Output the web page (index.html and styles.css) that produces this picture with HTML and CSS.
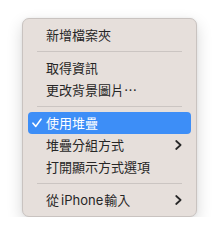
FILE: index.html
```html
<!DOCTYPE html>
<html lang="zh-Hant">
<head>
<meta charset="utf-8">
<link rel="stylesheet" href="styles.css">
</head>
<body>
<div class="menu">
  <div class="item"><span class="label">新增檔案夾</span></div>
  <div class="sep"></div>
  <div class="item"><span class="label">取得資訊</span></div>
  <div class="item"><span class="label">更改背景圖片…</span></div>
  <div class="sep"></div>
  <div class="item active">
    <svg class="check" width="10" height="10" viewBox="0 0 10 10"><polyline points="1,5.2 3.8,8.4 9,1.2" fill="none" stroke="#fff" stroke-width="1.6" stroke-linecap="round" stroke-linejoin="round"/></svg>
    <span class="label">使用堆疊</span>
  </div>
  <div class="item"><span class="label">堆疊分組方式</span>
    <svg class="chev" width="7" height="10" viewBox="0 0 7 10"><polyline points="1.2,1 5.6,5 1.2,9" fill="none" stroke="#262626" stroke-width="1.7" stroke-linecap="round" stroke-linejoin="round"/></svg>
  </div>
  <div class="item"><span class="label">打開顯示方式選項</span></div>
  <div class="sep"></div>
  <div class="item"><span class="label">從<span class="latin">iPhone</span>輸入</span>
    <svg class="chev" width="7" height="10" viewBox="0 0 7 10"><polyline points="1.2,1 5.6,5 1.2,9" fill="none" stroke="#262626" stroke-width="1.7" stroke-linecap="round" stroke-linejoin="round"/></svg>
  </div>
</div>
</body>
</html>
```
FILE: styles.css
```css
html, body {
  margin: 0;
  background: #ffffff;
}
body {
  padding: 18px 0 0 22px;
  font-family: "Noto Sans CJK TC", "Noto Sans", sans-serif;
  font-size: 13px;
  color: #262626;
}
.menu {
  width: 175px;
  box-sizing: border-box;
  background: #e6dfdb;
  border: 1px solid #c9c3c0;
  border-radius: 7px;
  padding: 5px 0;
  box-shadow: 0 6px 16px rgba(0, 0, 0, 0.16), 0 0 3px rgba(0, 0, 0, 0.06);
}
.item {
  height: 22px;
  margin: 0 5px;
  padding: 0 9px 0 18px;
  display: flex;
  align-items: center;
  justify-content: space-between;
  position: relative;
  border-radius: 4px;
  line-height: 22px;
}
.label {
  white-space: nowrap;
}
.latin {
  font-family: "Inter", "Noto Sans", sans-serif;
  font-size: 13px;
  margin: 0 1px 0 2px;
}
.active {
  background: #3d8ef7;
  color: #ffffff;
}
.check {
  position: absolute;
  left: 4px;
  top: 6px;
}
.chev {
  flex: none;
}
.sep {
  height: 1px;
  margin: 5px 14px 5px 14px;
  background: #cbc5c2;
}
```
